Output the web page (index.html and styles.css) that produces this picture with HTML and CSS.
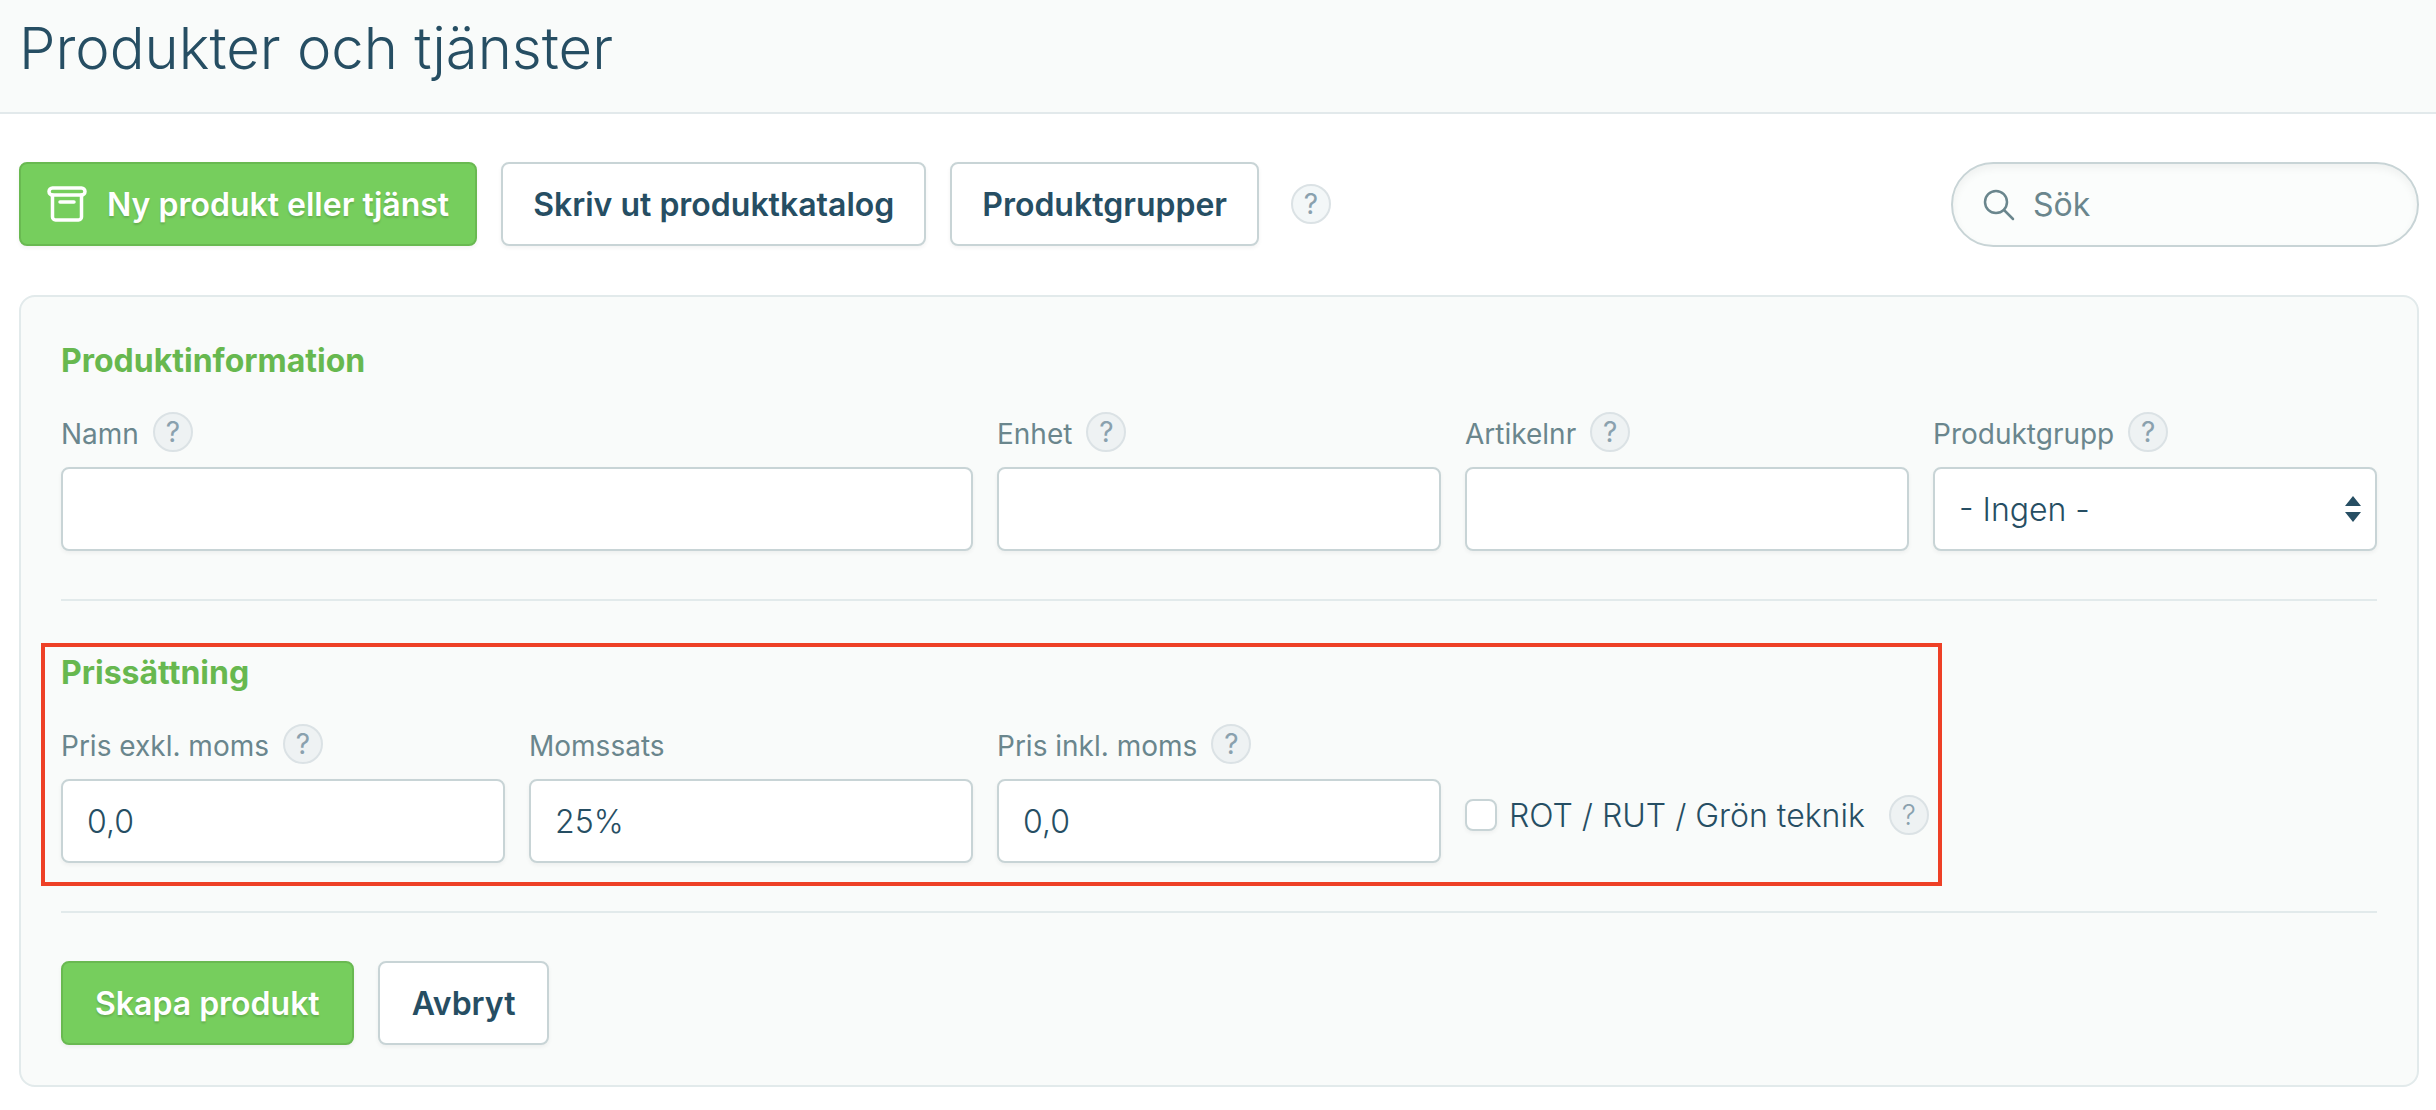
FILE: index.html
```
<!DOCTYPE html>
<html lang="sv">
<head>
    <meta charset="UTF-8">
    <meta name="viewport" content="width=device-width, initial-scale=1.0">
    <title>Produkter och tjänster</title>
    <link rel="stylesheet" href="styles.css">
</head>
<body>
    <header class="page-header">
        <h1>Produkter och tjänster</h1>
    </header>

    <main class="content">
        <div class="toolbar">
            <button type="button" class="btn btn-primary btn-icon">
                <svg class="icon-archive" viewBox="0 0 40 40" aria-hidden="true">
                    <rect x="2" y="4" width="36" height="7" rx="3.5"/>
                    <path d="M5.5 11v22a3 3 0 0 0 3 3h23a3 3 0 0 0 3-3V11M13 18h14"/>
                </svg>
                Ny produkt eller tjänst
            </button>
            <button type="button" class="btn">Skriv ut produktkatalog</button>
            <button type="button" class="btn">Produktgrupper</button>
            <button type="button" class="help help-toolbar" aria-label="Hjälp">?</button>
            <label class="search">
                <svg class="icon-search" viewBox="0 0 32 32" aria-hidden="true">
                    <circle cx="13" cy="13" r="11"/>
                    <path d="M21 21l9 9"/>
                </svg>
                <input type="search" placeholder="Sök" aria-label="Sök">
            </label>
        </div>

        <form class="panel">
            <section class="section">
                <h2>Produktinformation</h2>
                <div class="fields">
                    <div class="field wide">
                        <div class="field-head">
                            <label for="namn">Namn</label>
                            <button type="button" class="help" aria-label="Hjälp om namn">?</button>
                        </div>
                        <input type="text" id="namn" class="input">
                    </div>
                    <div class="field">
                        <div class="field-head">
                            <label for="enhet">Enhet</label>
                            <button type="button" class="help" aria-label="Hjälp om enhet">?</button>
                        </div>
                        <input type="text" id="enhet" class="input">
                    </div>
                    <div class="field">
                        <div class="field-head">
                            <label for="artikelnr">Artikelnr</label>
                            <button type="button" class="help" aria-label="Hjälp om artikelnr">?</button>
                        </div>
                        <input type="text" id="artikelnr" class="input">
                    </div>
                    <div class="field">
                        <div class="field-head">
                            <label for="produktgrupp">Produktgrupp</label>
                            <button type="button" class="help" aria-label="Hjälp om produktgrupp">?</button>
                        </div>
                        <div class="select">
                            <select id="produktgrupp" class="input">
                                <option>- Ingen -</option>
                            </select>
                            <svg class="icon-arrows" viewBox="0 0 16 26" aria-hidden="true">
                                <path d="M8 0l8 10H0zM8 26l8-10H0z"/>
                            </svg>
                        </div>
                    </div>
                </div>
            </section>

            <section class="section marked">
                <h2>Prissättning</h2>
                <div class="fields">
                    <div class="field">
                        <div class="field-head">
                            <label for="exkl">Pris exkl. moms</label>
                            <button type="button" class="help" aria-label="Hjälp om pris exkl. moms">?</button>
                        </div>
                        <input type="text" id="exkl" class="input" value="0,0">
                    </div>
                    <div class="field">
                        <div class="field-head">
                            <label for="momssats">Momssats</label>
                        </div>
                        <input type="text" id="momssats" class="input" value="25%">
                    </div>
                    <div class="field">
                        <div class="field-head">
                            <label for="inkl">Pris inkl. moms</label>
                            <button type="button" class="help" aria-label="Hjälp om pris inkl. moms">?</button>
                        </div>
                        <input type="text" id="inkl" class="input" value="0,0">
                    </div>
                    <div class="check">
                        <input type="checkbox" id="rot">
                        <label for="rot">ROT / RUT / Grön teknik</label>
                        <button type="button" class="help" aria-label="Hjälp om ROT / RUT / Grön teknik">?</button>
                    </div>
                </div>
            </section>

            <div class="actions">
                <button type="submit" class="btn btn-primary">Skapa produkt</button>
                <button type="button" class="btn">Avbryt</button>
            </div>
        </form>
    </main>
</body>
</html>
```
FILE: styles.css
```
* {
    box-sizing: border-box;
}
body {
    margin: 0;
    background: #fff;
    color: #264e63;
    font-family: Inter, "Liberation Sans", sans-serif;
    font-size: 32px;
}
button, input, select {
    font: inherit;
    color: inherit;
}
.page-header {
    padding: 8px 19px 24px;
    background: #f9fbfa;
    border-bottom: 2px solid #e2e9eb;
}
h1 {
    margin: 0;
    font-size: 58px;
    line-height: 80px;
    font-weight: 300;
}
.content {
    padding: 48px 17px 22px 19px;
}

/* Toolbar */
.toolbar {
    display: flex;
    align-items: flex-start;
    gap: 24px;
    margin-bottom: 48px;
}
.btn {
    height: 84px;
    padding: 0 32px;
    background: #fff;
    border: 2px solid #c8d4d6;
    border-radius: 8px;
    box-shadow: 0 2px 4px rgba(0, 0, 0, 0.05);
    font-weight: 600;
    white-space: nowrap;
    cursor: pointer;
}
.toolbar .btn {
    padding: 0 30px;
}
.btn-primary {
    background: #76ce5d;
    border-color: #69b951;
    color: #fff;
    text-shadow: 0 2px 2px rgba(0, 0, 0, 0.15);
}
.toolbar .btn-icon {
    display: flex;
    align-items: center;
    gap: 20px;
    padding: 0 26px;
}
.help {
    flex: none;
    width: 40px;
    height: 40px;
    padding: 0;
    background: #eef2f3;
    border: 2px solid #dbe2e5;
    border-radius: 50%;
    color: #8aa1ae;
    font-size: 28px;
    line-height: 36px;
    text-align: center;
    cursor: pointer;
}
.help-toolbar {
    margin: 22px 0 0 8px;
    background: #f3f7f8;
}
.search {
    display: flex;
    align-items: center;
    gap: 18px;
    width: 468px;
    height: 85px;
    margin-left: auto;
    padding: 0 30px;
    background: #fbfdfc;
    border: 2px solid #c8d4d6;
    border-radius: 43px;
    box-shadow: inset 0 4px 8px rgba(0, 0, 0, 0.05);
    color: #6a868d;
}
.search input {
    flex: 1;
    min-width: 0;
    padding: 0;
    background: none;
    border: 0;
    outline: 0;
}
.search input::placeholder {
    color: inherit;
    opacity: 1;
}

/* Icons */
.icon-archive, .icon-search {
    flex: none;
    fill: none;
    stroke: currentColor;
    stroke-linecap: round;
}
.icon-archive {
    width: 40px;
    height: 40px;
    stroke-width: 3.5;
}
.icon-search {
    width: 32px;
    height: 32px;
    stroke-width: 2.5;
}
.icon-arrows {
    position: absolute;
    top: 29px;
    right: 16px;
    width: 16px;
    height: 26px;
    fill: #264e63;
    pointer-events: none;
}

/* Form */
.panel {
    padding: 40px;
    background: #f9fbfa;
    border: 2px solid #e2eaeb;
    border-radius: 16px;
}
.section {
    position: relative;
    margin-bottom: 48px;
    padding-bottom: 48px;
    border-bottom: 2px solid #e2eaeb;
}
h2 {
    margin: 0 0 27px;
    color: #67b84f;
    font-size: 32px;
    line-height: 48px;
    font-weight: 700;
}
.fields {
    display: grid;
    grid-template-columns: repeat(5, minmax(0, 1fr));
    gap: 24px;
}
.wide {
    grid-column: span 2;
}
.field-head {
    display: flex;
    align-items: center;
    gap: 14px;
    height: 40px;
    margin-bottom: 15px;
    color: #6a868d;
    font-size: 28px;
}
.field-head label {
    padding-top: 3px;
}
.input {
    display: block;
    width: 100%;
    height: 84px;
    padding: 0 24px;
    background: #fff;
    border: 2px solid #c8d4d6;
    border-radius: 8px;
    box-shadow: 0 2px 4px rgba(0, 0, 0, 0.05);
    font-weight: 300;
}
.select {
    position: relative;
}
.select .input {
    appearance: none;
}
.check {
    display: flex;
    align-items: center;
    align-self: end;
    height: 40px;
    margin-bottom: 28px;
    font-weight: 300;
    white-space: nowrap;
}
.check input {
    appearance: none;
    flex: none;
    width: 32px;
    height: 32px;
    margin: 0 12px 0 0;
    background: #fff;
    border: 2px solid #c8d4d6;
    border-radius: 8px;
    box-shadow: 0 2px 4px rgba(0, 0, 0, 0.05);
}
.check input:checked {
    background: #76ce5d;
}
.check .help {
    margin-left: 24px;
}
/* Red frame round the pricing fields */
.marked::after {
    content: "";
    position: absolute;
    top: -6px;
    right: calc(20% - 28px);
    bottom: 25px;
    left: -20px;
    border: 4px solid #ee4026;
    pointer-events: none;
}
.actions {
    display: flex;
    gap: 24px;
}
```
